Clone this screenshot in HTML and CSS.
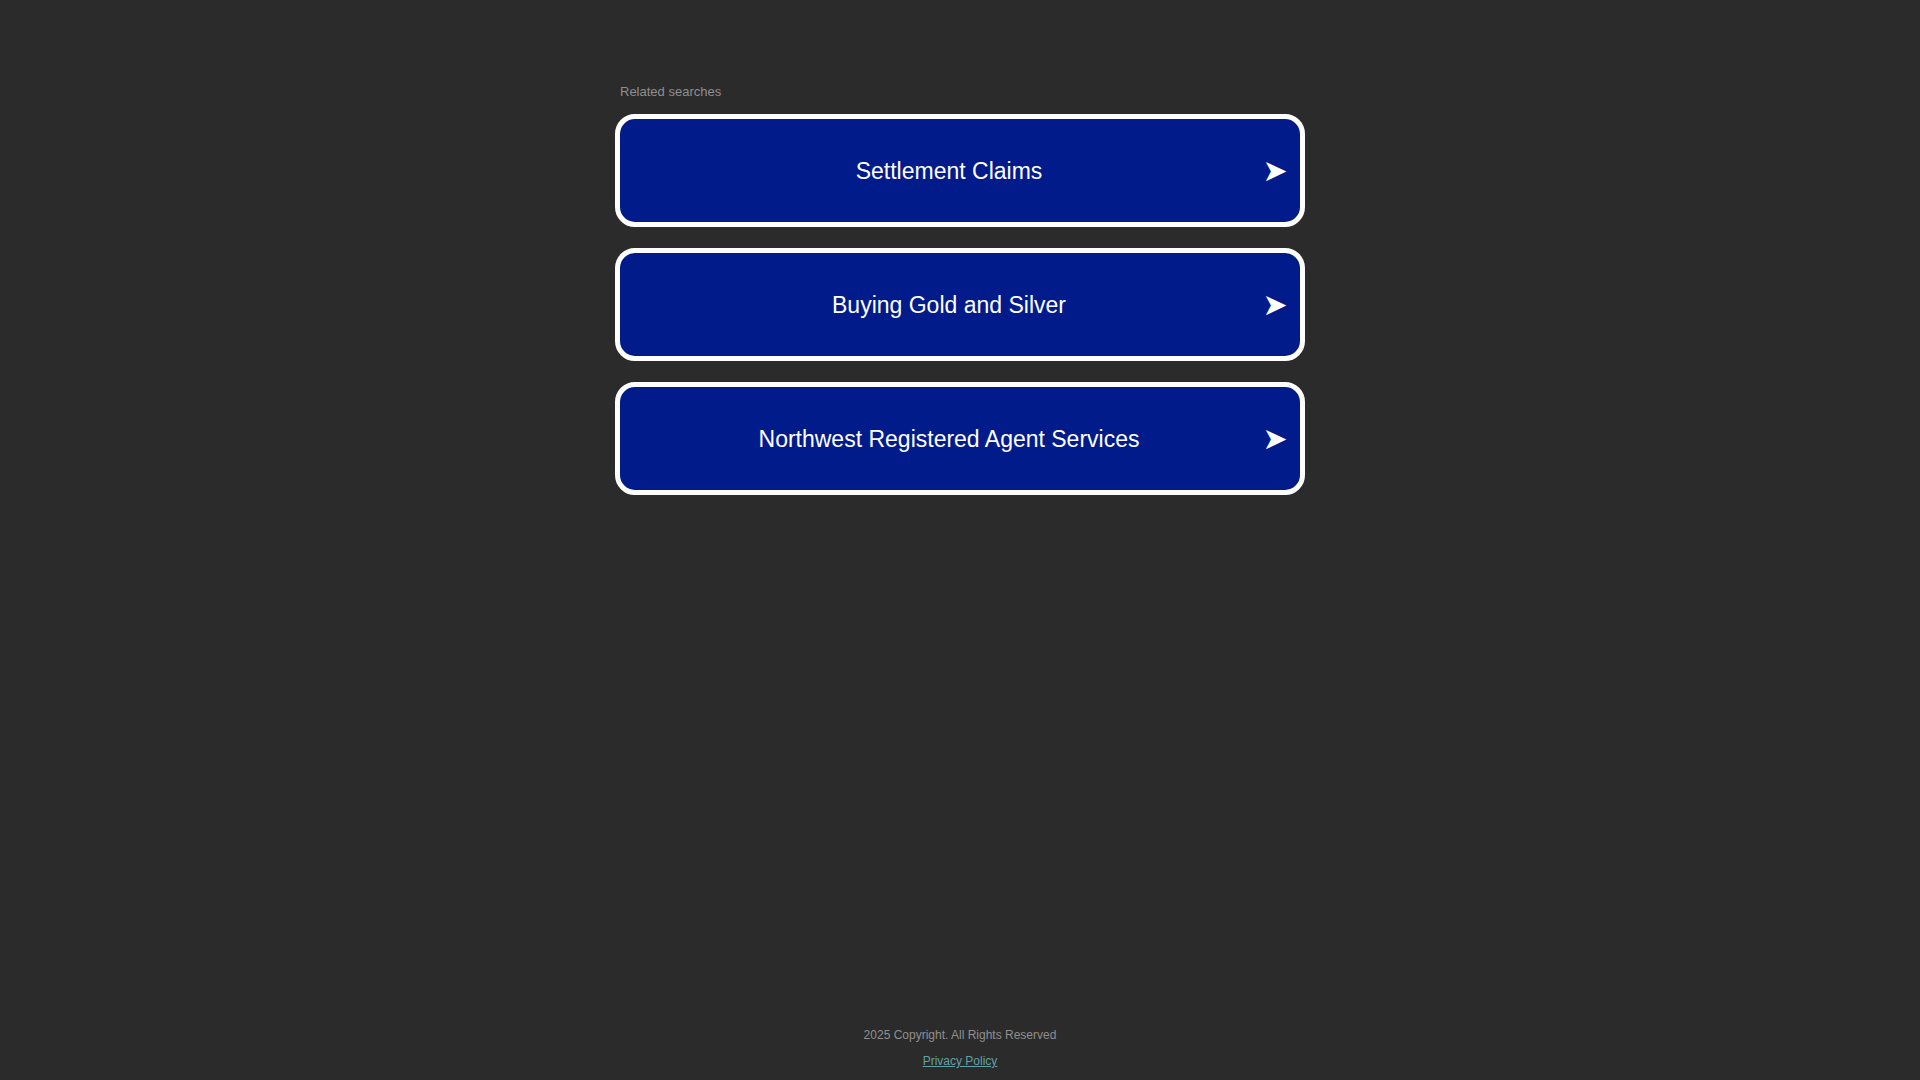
FILE: index.html
```html
<!DOCTYPE html>
<html lang="en">
<head>
<meta charset="utf-8">
<title>Related searches</title>
<link rel="stylesheet" href="styles.css">
</head>
<body>
<div class="page">
  <main class="content">
    <div class="heading">Related searches</div>
    <div class="list">
      <a class="item" href="#"><span class="label">Settlement Claims</span><span class="arrow">➤</span></a>
      <a class="item" href="#"><span class="label">Buying Gold and Silver</span><span class="arrow">➤</span></a>
      <a class="item" href="#"><span class="label">Northwest Registered Agent Services</span><span class="arrow">➤</span></a>
    </div>
  </main>
  <footer class="footer">
    <div class="copy">2025 Copyright. All Rights Reserved</div>
    <a class="privacy" href="#">Privacy Policy</a>
  </footer>
</div>
</body>
</html>
```
FILE: styles.css
```css
html, body {
  margin: 0;
  padding: 0;
  background: #2b2b2b;
  font-family: "Liberation Sans", Arial, sans-serif;
}
.page {
  min-height: 100vh;
  display: flex;
  flex-direction: column;
  box-sizing: border-box;
}
.content {
  width: 690px;
  margin: 0 auto;
  padding-top: 84px;
}
.heading {
  font-size: 13px;
  line-height: 15px;
  color: #8f8f8f;
  padding-left: 5px;
  margin-bottom: 15px;
}
.list {
  display: flex;
  flex-direction: column;
  gap: 21px;
}
.item {
  display: flex;
  align-items: center;
  box-sizing: border-box;
  height: 113px;
  border: 5px solid #ffffff;
  border-radius: 20px;
  background: #011b8a;
  color: #ffffff;
  text-decoration: none;
  padding-left: 16px;
}
.label {
  flex: 1;
  text-align: center;
  font-size: 23px;
  line-height: 28px;
}
.arrow {
  width: 26px;
  margin-right: 12px;
  font-family: "DejaVu Sans", sans-serif;
  font-size: 30px;
  line-height: 32px;
  text-align: center;
}
.footer {
  margin-top: auto;
  display: flex;
  flex-direction: column;
  align-items: center;
  gap: 12px;
  padding-bottom: 12px;
  font-size: 12px;
  line-height: 14px;
}
.copy {
  color: #8f8f8f;
}
.privacy {
  color: #5fa2a6;
  text-decoration: underline;
}
```
